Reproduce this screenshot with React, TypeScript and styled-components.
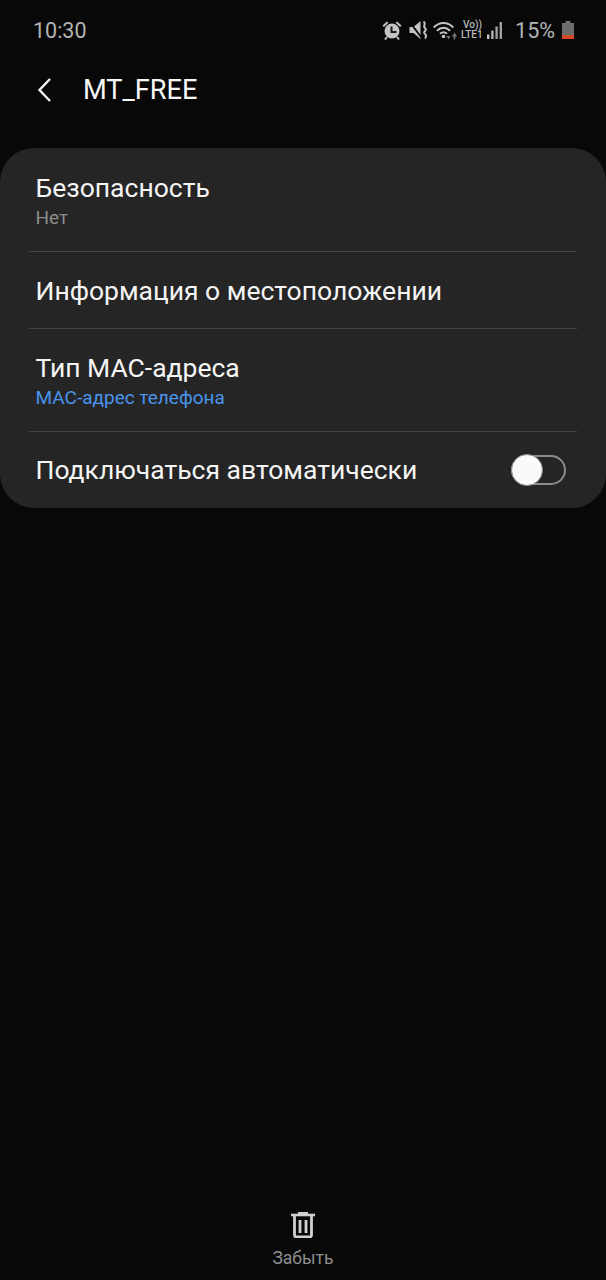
import styled, { createGlobalStyle } from 'styled-components';

const GlobalStyle = createGlobalStyle`
  html, body {
    margin: 0;
    padding: 0;
    background: #080808;
  }
  * {
    box-sizing: border-box;
  }
`;

const Screen = styled.div`
  width: 606px;
  height: 1280px;
  display: flex;
  flex-direction: column;
  background: #080808;
  font-family: Roboto, 'Noto Sans', sans-serif;
  color: #f5f5f5;
`;

const StatusBar = styled.div`
  height: 60px;
  padding: 0 32px 0 33px;
  display: flex;
  align-items: center;
  justify-content: space-between;
  color: #b4b4b4;
`;

const Clock = styled.span`
  font-size: 21.5px;
`;

const StatusIcons = styled.div`
  display: flex;
  align-items: center;
`;

const Percent = styled.span`
  font-size: 21.5px;
  margin: 0 7px 0 13px;
`;

const Glyph = styled.svg<{ $left?: number }>`
  display: block;
  flex: none;
  margin-left: ${p => p.$left ?? 0}px;
`;

const Header = styled.div`
  height: 60px;
  padding-left: 36px;
  display: flex;
  align-items: center;
  gap: 29px;
`;

const Title = styled.h1`
  margin: 0;
  font-size: 27.2px;
  font-weight: 400;
  color: #f7f7f7;
`;

const Card = styled.section`
  margin-top: 28px;
  height: 360px;
  background: #252525;
  border-radius: 34px;
  padding: 0 29px;
  display: flex;
  flex-direction: column;
`;

const Row = styled.div<{ $height: number; $divider?: boolean }>`
  height: ${p => p.$height}px;
  padding: 0 11px 0 6.5px;
  display: flex;
  align-items: center;
  justify-content: space-between;
  border-bottom: ${p => (p.$divider ? '1px solid #424242' : 'none')};
`;

const RowText = styled.div<{ $nudge?: number }>`
  display: flex;
  flex-direction: column;
  padding-top: ${p => p.$nudge ?? 0}px;
`;

const RowTitle = styled.span`
  font-size: 26.5px;
  line-height: 32px;
  color: #f5f5f5;
`;

const RowSub = styled.span<{ $accent?: boolean }>`
  font-size: 19px;
  line-height: 24px;
  margin-top: 2px;
  color: ${p => (p.$accent ? '#4a94ec' : '#8c8c8c')};
`;

const Toggle = styled.div`
  position: relative;
  width: 55px;
  height: 30px;
  border: 2px solid #8a8a8a;
  border-radius: 15px;
`;

const Knob = styled.div`
  position: absolute;
  left: -2px;
  top: -3px;
  width: 32px;
  height: 32px;
  border-radius: 50%;
  background: #fafafa;
  border: 1px solid #8a8a8a;
`;

const Spacer = styled.div`
  flex: 1;
`;

const Footer = styled.div`
  height: 68px;
  display: flex;
  flex-direction: column;
  align-items: center;
`;

const FooterLabel = styled.span`
  margin-top: 9px;
  font-size: 17.5px;
  line-height: 22px;
  color: #8e8e8e;
`;

const Lte = styled.div`
  margin-left: 4px;
  width: 21px;
  display: flex;
  flex-direction: column;
  font-size: 10px;
  font-weight: 500;
  color: #b8b8b8;
`;

const LteLine = styled.span<{ $inset?: boolean }>`
  display: block;
  height: 10px;
  line-height: 10px;
  margin-left: ${p => (p.$inset ? 2 : 0)}px;
  white-space: nowrap;
`;

function AlarmIcon() {
  return (
    <Glyph width='20' height='20' viewBox='0 0 20 20'>
      <circle cx='10' cy='11' r='7.500' fill='#c4c4c4' />
      <path d='M9.500 6.500v5.500h5' stroke='#1a1a1a' strokeWidth='2' fill='none' />
      <path d='M0.500 5.500L5 1.500l1.300 1.300L2 7zM19.500 5.500L15 1.500l-1.300 1.300L18 7z' fill='#c4c4c4' />
      <path d='M5 17l-2 2.500M15 17l2 2.500' stroke='#c4c4c4' strokeWidth='2' />
    </Glyph>
  );
}

function MuteIcon() {
  return (
    <Glyph $left={7} width='19' height='20' viewBox='0 0 19 20'>
      <path d='M0.500 7h4l7-6v18l-7-6h-4z' fill='#c4c4c4' />
      <path d='M0 1l12 16' stroke='#080808' strokeWidth='1.800' />
      <path
        d='M14.500 1.500c3.500 2.500-1.500 4 1.500 6.500s-3 3.500 0 6 -1 3 1 4.500'
        stroke='#c4c4c4'
        strokeWidth='2'
        fill='none'
      />
    </Glyph>
  );
}

function WifiIcon() {
  return (
    <Glyph $left={5} width='24' height='19' viewBox='0 0 24 19'>
      <g stroke='#c4c4c4' strokeWidth='2' fill='none'>
        <path d='M0.700 6.500c5.800-6 13.800-6 19.600 0' />
        <path d='M4 9.800c4-4 9-4 13 0' />
        <path d='M7 12.800c2.200-2 4.800-2 7 0' />
      </g>
      <circle cx='10.500' cy='15.500' r='1.800' fill='#c4c4c4' />
      <path d='M13.500 15h4l-2 3.500zM19 15.500l2.500-4 2.500 4h-1.700v3h-1.600v-3z' fill='#777' />
    </Glyph>
  );
}

function SignalIcon() {
  return (
    <Glyph $left={5} width='15' height='17' viewBox='0 0 15 17'>
      <rect x='0' y='12.500' width='2.400' height='4.500' fill='#c4c4c4' />
      <rect x='4.200' y='8.500' width='2.400' height='8.500' fill='#b0b0b0' />
      <rect x='8.400' y='4.500' width='2.400' height='12.500' fill='#a0a0a0' />
      <rect x='12.600' y='0' width='2.400' height='17' fill='#a0a0a0' />
    </Glyph>
  );
}

function BatteryIcon() {
  return (
    <Glyph width='12' height='18' viewBox='0 0 12 18'>
      <rect x='3.500' y='0' width='5' height='2' fill='#707070' />
      <rect x='0' y='2' width='12' height='12' fill='#6c6c6c' />
      <rect x='0' y='14' width='12' height='4' fill='#d24a25' />
    </Glyph>
  );
}

function BackIcon() {
  return (
    <Glyph width='18' height='24' viewBox='0 0 18 24'>
      <path d='M14 1L3.500 12 14 23' stroke='#f5f5f5' strokeWidth='2.400' fill='none' />
    </Glyph>
  );
}

function TrashIcon() {
  return (
    <Glyph width='24' height='26' viewBox='0 0 24 26'>
      <path d='M0 3h24' stroke='#d0d0d0' strokeWidth='2.600' />
      <path d='M8 2V1h8v1' stroke='#d0d0d0' strokeWidth='2' fill='none' />
      <path d='M3.500 4v19a2 2 0 0 0 2 2h13a2 2 0 0 0 2-2V4' stroke='#d0d0d0' strokeWidth='2.800' fill='none' />
      <path d='M9 8v13M15 8v13' stroke='#d0d0d0' strokeWidth='2.800' />
    </Glyph>
  );
}

export default function App() {
  return (
    <>
      <GlobalStyle />
      <Screen>
        <StatusBar>
          <Clock>10:30</Clock>
          <StatusIcons>
            <AlarmIcon />
            <MuteIcon />
            <WifiIcon />
            <Lte>
              <LteLine $inset>Vo))</LteLine>
              <LteLine>LTE1</LteLine>
            </Lte>
            <SignalIcon />
            <Percent>15%</Percent>
            <BatteryIcon />
          </StatusIcons>
        </StatusBar>
        <Header>
          <BackIcon />
          <Title>MT_FREE</Title>
        </Header>
        <Card>
          <Row $height={104} $divider>
            <RowText $nudge={2}>
              <RowTitle>Безопасность</RowTitle>
              <RowSub>Нет</RowSub>
            </RowText>
          </Row>
          <Row $height={77} $divider>
            <RowText $nudge={2}>
              <RowTitle>Информация о местоположении</RowTitle>
            </RowText>
          </Row>
          <Row $height={103} $divider>
            <RowText $nudge={2}>
              <RowTitle>Тип MAC-адреса</RowTitle>
              <RowSub $accent>MAC-адрес телефона</RowSub>
            </RowText>
          </Row>
          <Row $height={76}>
            <RowText>
              <RowTitle>Подключаться автоматически</RowTitle>
            </RowText>
            <Toggle>
              <Knob />
            </Toggle>
          </Row>
        </Card>
        <Spacer />
        <Footer>
          <TrashIcon />
          <FooterLabel>Забыть</FooterLabel>
        </Footer>
      </Screen>
    </>
  );
}
